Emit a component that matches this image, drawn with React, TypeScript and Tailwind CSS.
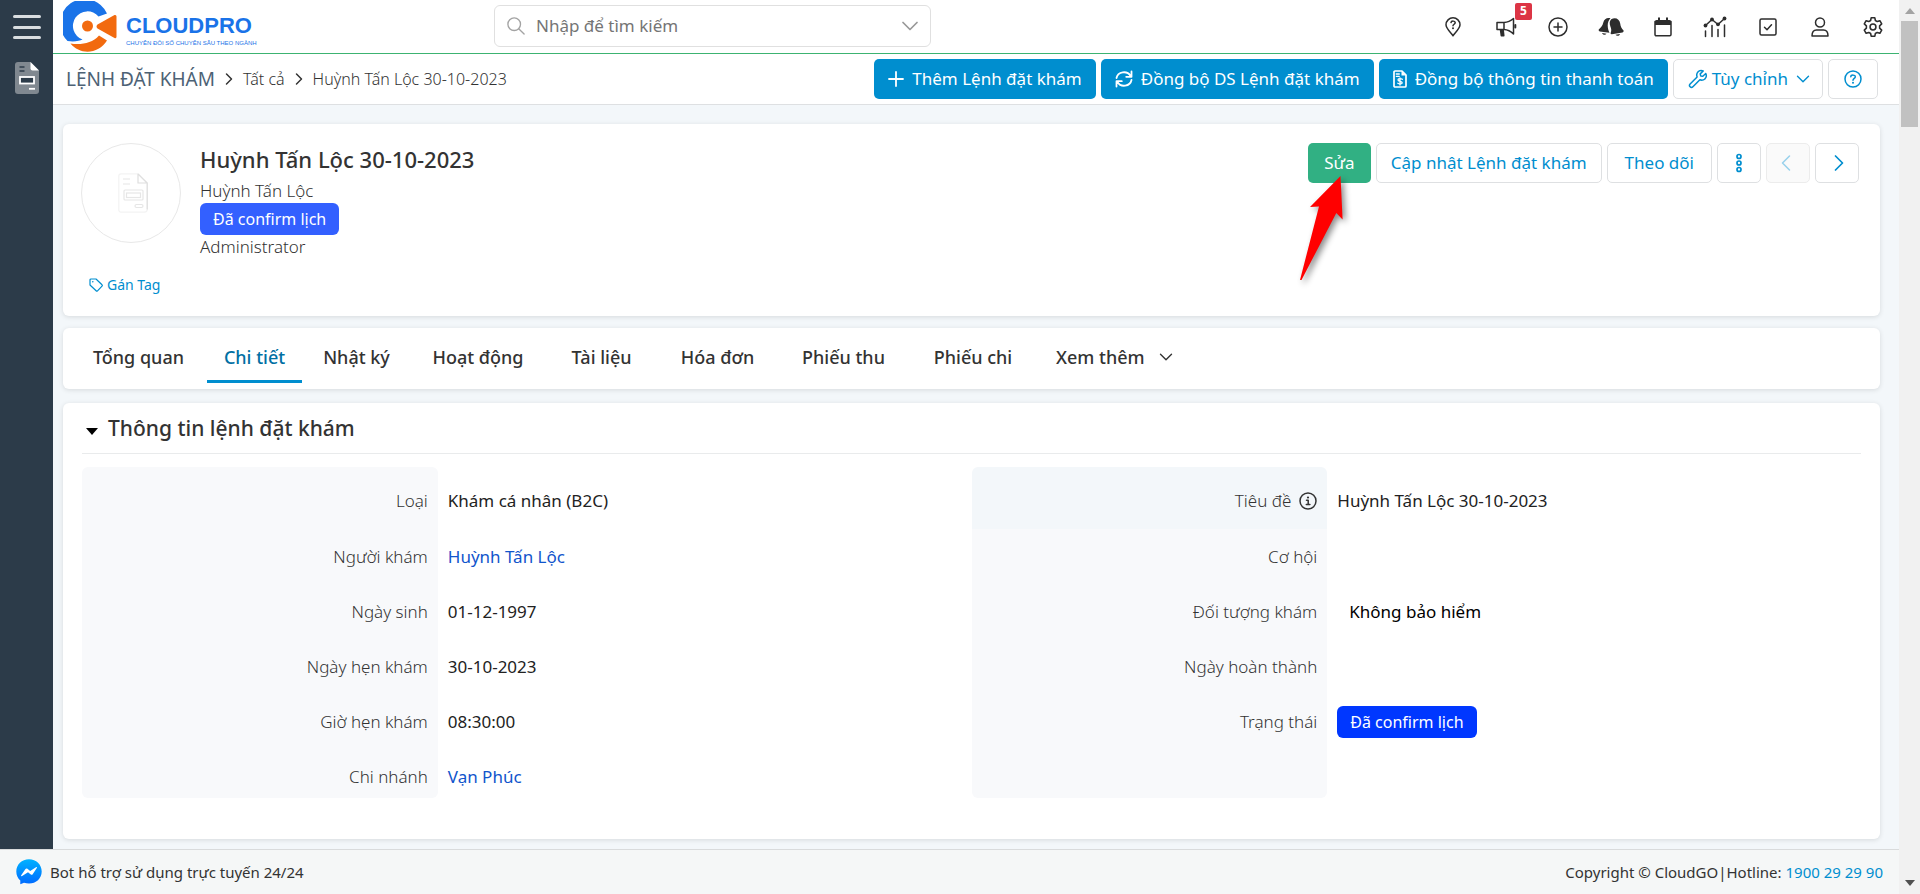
import React from "react";
import { ChevronDown, ChevronLeft, ChevronRight } from "lucide-react";

type IconProps = { className?: string };

const stroke = {
  fill: "none",
  stroke: "currentColor",
  strokeWidth: 1.5,
  strokeLinecap: "round",
  strokeLinejoin: "round",
} as const;

function Logo() {
  return (
    <svg viewBox="0 0 54 51" className="h-[51px] w-[54px] shrink-0" aria-hidden="true">
      <path
        d="M44 12.5A24.5 24.5 0 1 0 4.5 40C11 41 16.500 40 19.500 38.500A14.500 14.500 0 1 1 35.500 15.500Z"
        fill="#1a73e8"
      />
      <path d="M7.500 42.500C18 44 29 42.500 36 34.500L44 39.500C36 53 17 54.500 7.500 42.500Z" fill="#f26a0f" />
      <circle cx="24.500" cy="25" r="5.500" fill="#f26a0f" />
      <path d="M34.500 23.500L51.500 14Q53.500 13.500 53.500 15.500V35.500Q53.500 38 51.500 37L34.500 27.500Q32.500 25.500 34.500 23.500Z" fill="#f26a0f" />
    </svg>
  );
}

function SearchIcon({ className }: IconProps) {
  return (
    <svg viewBox="0 0 20 20" className={className} aria-hidden="true">
      <g {...stroke}>
        <circle cx="8" cy="8" r="7" />
        <path d="M13 13l6 6" />
      </g>
    </svg>
  );
}

function PinQuestionIcon() {
  return (
    <svg viewBox="0 0 16 20" className="h-5 w-4" aria-hidden="true">
      <g {...stroke}>
        <path d="M8 18.800C6.500 16.500 1 11.500 1 7.800a7 7 0 0 1 14 0C15 11.500 9.500 16.500 8 18.800Z" />
        <path d="M6 5.600c.2-2 4.200-2 4.200.2C10.200 7.200 8 7.300 8 8.800" />
      </g>
      <circle cx="8" cy="11.300" r="1" fill="currentColor" />
    </svg>
  );
}

function BullhornIcon() {
  return (
    <svg viewBox="0 0 22 20" className="h-5 w-[22px]" aria-hidden="true">
      <g {...stroke}>
        <path d="M2 5.500h7v7H2ZM9 5.500c4-.2 7-1.800 9.500-4v15.500c-2.500-2.500-5.500-4.300-9.500-4.500" />
        <path d="M20.300 8v2.500" strokeWidth="2" />
        <path d="M5.500 13l.8 5.700h2.500L8.200 13Z" fill="currentColor" />
      </g>
    </svg>
  );
}

function PlusCircleIcon() {
  return (
    <svg viewBox="0 0 20 20" className="h-5 w-5" aria-hidden="true">
      <g {...stroke}>
        <circle cx="10" cy="10" r="9" />
        <path d="M10 6v8M6 10h8" />
      </g>
    </svg>
  );
}

function BellsIcon() {
  return (
    <svg viewBox="0 0 26 20" className="h-5 w-[26px]" aria-hidden="true">
      <g fill="currentColor">
        <path d="M12.500 1.300C9 .3 6.200 2 5.300 5.500 4.600 8.800 2.800 10.500.9 12.300c-.6.900-.2 1.900.9 2.100l9.700 1.300C9.400 11.500 8.600 5 12.500 1.300Z" />
        <path d="M13.200 2.300c4.300-2.300 8.300-.2 9 4.200.4 3.300 1.500 5 3.200 6.800.6.900.1 1.900-.9 2.100l-10.700 1.800c-1 .1-1.500-.7-1-1.700.9-2 .4-4-.4-6C11.300 6.500 11.500 4 13.200 2.300Z" />
        <path d="M4 16l4.500.7c-1 1.700-3.800 1.300-4.500-.7ZM17.500 17.700l4.500-.8c-.5 2.100-3.500 2.600-4.500.8Z" />
      </g>
    </svg>
  );
}

function CalendarIcon() {
  return (
    <svg viewBox="0 0 18 20" className="h-5 w-[18px]" aria-hidden="true">
      <path d="M1 4.500h16v13a1.200 1.200 0 0 1-1.200 1.200H2.200A1.200 1.200 0 0 1 1 17.500Z" {...stroke} />
      <path d="M1 4.500A1.500 1.500 0 0 1 2.500 3H4V.5h2V3h6V.5h2V3h1.500A1.500 1.500 0 0 1 17 4.500V8H1Z" fill="currentColor" />
    </svg>
  );
}

function ChartIcon() {
  return (
    <svg viewBox="0 0 24 22" className="h-[22px] w-6" aria-hidden="true">
      <path d="M2.500 9.500L9 3.500l6 5L21.500 2.500" {...stroke} />
      <g fill="currentColor">
        <circle cx="2.500" cy="9.500" r="1.900" />
        <circle cx="9" cy="3.500" r="1.900" />
        <circle cx="15" cy="8.300" r="1.900" />
        <circle cx="21.500" cy="2.500" r="1.900" />
      </g>
      <path d="M2.500 15v5.500M9 9.500v11M15 13.500v7M21.500 9v11.500" {...stroke} />
    </svg>
  );
}

function CheckSquareIcon() {
  return (
    <svg viewBox="0 0 18 18" className="h-[18px] w-[18px]" aria-hidden="true">
      <g {...stroke}>
        <rect x="1" y="1" width="16" height="16" rx="1.500" />
        <path d="M5.500 9.200l2.500 2.500 4.500-5" />
      </g>
    </svg>
  );
}

function UserIcon() {
  return (
    <svg viewBox="0 0 18 20" className="h-5 w-[18px]" aria-hidden="true">
      <g {...stroke}>
        <circle cx="9" cy="5.500" r="4.500" />
        <path d="M1 19c0-4 2-6 4.500-6h7c2.500 0 4.500 2 4.500 6Z" />
      </g>
    </svg>
  );
}

function GearIcon() {
  return (
    <svg viewBox="0 0 24 24" className="h-[22px] w-[22px]" aria-hidden="true">
      <g {...stroke} strokeWidth={1.7}>
        <path d="M10 2h4l.6 2.900 2 1.200 2.900-1 2 3.500-2.300 2.100v2.600l2.300 2.100-2 3.500-2.900-1-2 1.200L14 22h-4l-.6-2.900-2-1.200-2.900 1-2-3.500 2.300-2.100v-2.600L2.500 8.600l2-3.500 2.900 1 2-1.200Z" />
        <circle cx="12" cy="12" r="3.200" />
      </g>
    </svg>
  );
}

function SyncIcon() {
  return (
    <svg viewBox="0 0 18 18" className="h-[18px] w-[18px]" aria-hidden="true">
      <g {...stroke} strokeWidth={1.800}>
        <path d="M1.500 8A7.500 7 0 0 1 15.500 6M16.500 1.500V6.800H11.200M16.500 10A7.500 7 0 0 1 2.500 12M1.500 16.500V11.200H6.800" />
      </g>
    </svg>
  );
}

function InvoiceIcon() {
  return (
    <svg viewBox="0 0 14 18" className="h-[18px] w-3.5" aria-hidden="true">
      <path d="M1 2a1 1 0 0 1 1-1h7l4 4v11a1 1 0 0 1-1 1H2a1 1 0 0 1-1-1Z" {...stroke} strokeWidth={1.700} />
      <path d="M8.500 1v4.500H13Z" fill="currentColor" />
      <path d="M3.300 4h3M3.300 6.300h3M9.300 9.300C8 8.300 5 8.500 5 10c0 1.700 4.200.9 4.200 2.700 0 1.600-3 1.600-4.400.6M7 7.800v7.200" {...stroke} strokeWidth={1.300} />
    </svg>
  );
}

function WrenchIcon() {
  return (
    <svg viewBox="0 0 20 20" className="h-5 w-5" aria-hidden="true">
      <g {...stroke}>
        <path d="M17.800 4.500L14.800 7.300 12.700 6.900 12.200 4.900 15.200 2C12.900 1 10.300 1.800 9.200 4 8.600 5.300 8.600 6.700 9.100 8L2.100 15C1.300 15.900 1.300 17 2.100 17.800s2 .8 2.800 0L11.900 10.800c2.300.9 5-.1 6-2.300.6-1.300.5-2.700-.1-4Z" />
      </g>
    </svg>
  );
}

function HelpIcon() {
  return (
    <svg viewBox="0 0 18 18" className="h-[18px] w-[18px]" aria-hidden="true">
      <g {...stroke}>
        <circle cx="9" cy="9" r="8" />
        <path d="M6.800 6.800c.2-2.300 4.600-2.200 4.500.1C11.200 8.300 9 8.500 9 10.200" />
      </g>
      <circle cx="9" cy="12.800" r="1" fill="currentColor" />
    </svg>
  );
}

function InfoIcon() {
  return (
    <svg viewBox="0 0 18 18" className="h-[18px] w-[18px]" aria-hidden="true">
      <circle cx="9" cy="9" r="8" {...stroke} />
      <path d="M7.500 8.300H9.200V12.500M7.300 12.500h3.600" {...stroke} />
      <circle cx="9" cy="5.500" r="1.100" fill="currentColor" />
    </svg>
  );
}

function TagIcon() {
  return (
    <svg viewBox="0 0 14 14" className="h-3.5 w-3.5" aria-hidden="true">
      <path d="M1 2a1 1 0 0 1 1-1h5l6 5.800a1 1 0 0 1 0 1.400L8.500 12.800a1 1 0 0 1-1.400 0L1 7Z" {...stroke} strokeWidth={1.200} />
      <circle cx="3.800" cy="3.800" r="0.800" fill="currentColor" />
    </svg>
  );
}

function DocumentIcon() {
  return (
    <svg viewBox="0 0 24 32" className="h-8 w-6" aria-hidden="true">
      <path d="M3 0h12.500L24 8.500V29a3 3 0 0 1-3 3H3a3 3 0 0 1-3-3V3a3 3 0 0 1 3-3Z" fill="#808890" />
      <path d="M15.500 0L24 8.500h-6.500a2 2 0 0 1-2-2Z" fill="#fff" />
      <path d="M4.500 5h5M4.500 9h5" stroke="#2c3b49" strokeWidth="1.500" />
      <rect x="5" y="15" width="14" height="6.500" fill="#2c3b49" stroke="#fff" strokeWidth="1.800" />
      <path d="M14 26.800h6" stroke="#fff" strokeWidth="1.800" />
    </svg>
  );
}

function AvatarDocumentIcon() {
  return (
    <svg viewBox="0 0 30 40" className="ml-1 h-10 w-[30px]" aria-hidden="true">
      <g fill="none" stroke="#e6e6e6" strokeWidth="1.200">
        <path d="M3 .8H20L29.200 10V36.500A2.800 2.800 0 0 1 26.500 39.200H3A2.400 2.400 0 0 1 .8 36.500V3A2.200 2.200 0 0 1 3 .8Z" stroke="#f3f3f3" />
        <path d="M20 .8V10H29.200M20 .8L29.200 10V36.500" stroke="#dedede" />
        <rect x="6" y="17" width="19" height="10" rx="1" />
        <rect x="8.500" y="20" width="14" height="4.500" />
        <path d="M5 6h7M5 11h7" />
        <rect x="17" y="31.500" width="8" height="3" rx="1.500" />
      </g>
    </svg>
  );
}

function MessengerIcon() {
  return (
    <svg viewBox="0 0 26 26" className="h-[26px] w-[26px]" aria-hidden="true">
      <defs>
        <linearGradient id="messenger" x1="0" y1="0" x2="0" y2="1">
          <stop offset="0" stopColor="#00b2ff" />
          <stop offset="1" stopColor="#006aff" />
        </linearGradient>
      </defs>
      <path d="M13 .3C5.800.3.300 5.600.300 12.500c0 3.700 1.500 6.800 4 9v3.800l3.700-1.500c1.500.5 3.200.8 5 .8 7.200 0 12.700-5.200 12.700-12.100S20.200.3 13 .3Z" fill="url(#messenger)" />
      <path d="M5.200 16.200L9.500 10c.5-.7 1.200-.8 1.900-.3L14.200 12l5.800-3.800c.6-.4 1.200.2.8.8L16.700 15.200c-.5.700-1.200.8-1.900.3L12 13.300l-5.900 3.800c-.6.300-1.300-.3-.9-.9Z" fill="#fff" />
    </svg>
  );
}

function PointerArrow() {
  return (
    <svg
      viewBox="0 0 44 104"
      className="pointer-events-none absolute top-[33px] -left-2 z-10 h-[104px] w-11 overflow-visible drop-shadow-[3px_3px_3px_rgba(0,0,0,0.45)]"
      aria-hidden="true"
    >
      <path d="M40.500 0L42.600 43.500 36.300 37 1.500 104H0L19 30.500 10 31Z" fill="#ff0000" />
    </svg>
  );
}

const headerIcons = [
  { label: "Bản đồ", icon: <PinQuestionIcon /> },
  { label: "Thông báo", icon: <BullhornIcon />, badge: "5" },
  { label: "Thêm", icon: <PlusCircleIcon /> },
  { label: "Nhắc nhở", icon: <BellsIcon /> },
  { label: "Lịch", icon: <CalendarIcon /> },
  { label: "Báo cáo", icon: <ChartIcon /> },
  { label: "Công việc", icon: <CheckSquareIcon /> },
  { label: "Tài khoản", icon: <UserIcon /> },
  { label: "Cài đặt", icon: <GearIcon /> },
];

const tabs = [
  { label: "Tổng quan", width: "w-[137px]" },
  { label: "Chi tiết", width: "w-[95px]", active: true },
  { label: "Nhật ký", width: "w-[109px]" },
  { label: "Hoạt động", width: "w-[134px]" },
  { label: "Tài liệu", width: "w-[113px]" },
  { label: "Hóa đơn", width: "w-[119px]" },
  { label: "Phiếu thu", width: "w-[133px]" },
  { label: "Phiếu chi", width: "w-[126px]" },
];

type Field = { label: string; value?: string; kind?: "link" | "badge" | "plain"; info?: boolean };

const leftFields: Field[] = [
  { label: "Loại", value: "Khám cá nhân (B2C)" },
  { label: "Người khám", value: "Huỳnh Tấn Lộc", kind: "link" },
  { label: "Ngày sinh", value: "01-12-1997" },
  { label: "Ngày hẹn khám", value: "30-10-2023" },
  { label: "Giờ hẹn khám", value: "08:30:00" },
  { label: "Chi nhánh", value: "Vạn Phúc", kind: "link" },
];

const rightFields: Field[] = [
  { label: "Tiêu đề", value: "Huỳnh Tấn Lộc 30-10-2023", info: true },
  { label: "Cơ hội" },
  { label: "Đối tượng khám", value: "Không bảo hiểm", kind: "plain" },
  { label: "Ngày hoàn thành" },
  { label: "Trạng thái", value: "Đã confirm lịch", kind: "badge" },
  { label: "" },
];

function FieldValue({ field }: { field: Field }) {
  if (!field.value) return null;
  if (field.kind === "link")
    return (
      <a href="#" className="text-[#1155cc]">
        {field.value}
      </a>
    );
  if (field.kind === "badge")
    return (
      <span className="-my-1 inline-block rounded-md bg-[#0037ff] px-[13px] py-1 text-base text-white">
        {field.value}
      </span>
    );
  if (field.kind === "plain") return <span className="px-3 text-black">{field.value}</span>;
  return <>{field.value}</>;
}

function FieldColumn({ fields }: { fields: Field[] }) {
  return (
    <dl className="text-[17px] leading-6">
      {fields.map((field, index) => {
        const first = index === 0;
        const last = index === fields.length - 1;
        const size = first ? "h-[62px] pt-[22px]" : last ? "h-[49px] pt-4" : "h-[55px] pt-4";
        const corner = first ? "rounded-t-md" : last ? "rounded-b-md" : "";
        const tint = field.info ? "bg-[#f3f7fa]" : "bg-[#f8f9fb]";
        return (
          <div key={index} className="flex">
            <dt className={`flex w-2/5 justify-end gap-2 pr-2.5 font-light text-[#333] ${size} ${corner} ${tint}`}>
              {field.label}
              {field.info && (
                <span className="pt-[3px]">
                  <InfoIcon />
                </span>
              )}
            </dt>
            <dd className={`flex-1 pl-2.5 text-[#222] ${size}`}>
              <FieldValue field={field} />
            </dd>
          </div>
        );
      })}
    </dl>
  );
}

const primaryButton = "flex h-10 items-center gap-2 rounded-[5px] bg-[#008ecf] px-3.5 text-[17px] text-white";
const outlineButton =
  "flex h-10 items-center justify-center rounded-[5px] border border-[#dee0e2] bg-white text-[17px] text-[#008ecf]";
const card = "rounded-md bg-white shadow-[0_1px_5px_rgba(0,0,0,0.12)]";

export default function App() {
  return (
    <div className="flex min-h-screen bg-[#f3f7fa] font-['Noto_Sans','Open_Sans',sans-serif] text-[#333]">
      <div className="flex min-w-0 flex-1 flex-col">
        <div className="flex flex-1">
          <nav className="flex w-[53px] shrink-0 flex-col items-center bg-[#2c3b49] pt-[15px]">
            <button type="button" aria-label="Menu" className="flex h-6 w-7 flex-col justify-between">
              <span className="h-[3px] w-7 rounded-sm bg-[#d9dde0]" />
              <span className="h-[3px] w-7 rounded-sm bg-[#d9dde0]" />
              <span className="h-[3px] w-7 rounded-sm bg-[#d9dde0]" />
            </button>
            <a href="#" aria-label="Lệnh đặt khám" className="mt-[23px]">
              <DocumentIcon />
            </a>
          </nav>

          <div className="min-w-0 flex-1">
            <header className="flex h-[54px] items-center justify-between border-b border-[#3cb371] bg-white">
              <a href="#" className="flex w-[441px] items-center gap-[9px] pl-2.5">
                <Logo />
                <span className="flex flex-col pt-2 font-['Liberation_Sans',sans-serif] text-[#1a73e8]">
                  <span className="text-[22px] leading-[22px] font-bold">CLOUDPRO</span>
                  <span className="mt-0.5 text-[6px] leading-2 whitespace-nowrap">
                    CHUYỂN ĐỔI SỐ CHUYÊN SÂU THEO NGÀNH
                  </span>
                </span>
              </a>
              <label className="mb-px flex h-[42px] w-[437px] items-center rounded-md border border-[#e0e0e0] pr-1.5 pl-3">
                <SearchIcon className="h-[18px] w-[18px] text-[#a3a3a3]" />
                <input
                  type="text"
                  aria-label="Tìm kiếm"
                  placeholder="Nhập để tìm kiếm"
                  className="ml-[11px] min-w-0 flex-1 text-[17px] outline-none placeholder:text-[#757575]"
                />
                <ChevronDown className="h-7 w-7" color="#999" strokeWidth={1.5} />
              </label>
              <div className="ml-auto grid w-[472px] grid-cols-9 text-[#2d2d2d]">
                {headerIcons.map((item) => (
                  <button
                    key={item.label}
                    type="button"
                    aria-label={item.label}
                    className="relative flex h-12 items-center justify-center"
                  >
                    {item.icon}
                    {item.badge && (
                      <span className="absolute top-0 right-0 flex h-[17px] w-[17px] items-center justify-center rounded-xs bg-[#dc3545] text-xs font-bold text-white">
                        {item.badge}
                      </span>
                    )}
                  </button>
                ))}
              </div>
            </header>

            <div className="flex h-[51px] items-center justify-between border-b border-[#dee0e2] bg-white pr-[21px] pl-[13px]">
              <div className="flex items-center gap-1 text-base">
                <span className="text-[19px] text-[#4d6275]">LỆNH ĐẶT KHÁM</span>
                <ChevronRight className="h-5 w-5" strokeWidth={1.8} />
                <a href="#" className="font-light">
                  Tất cả
                </a>
                <ChevronRight className="h-5 w-5" strokeWidth={1.8} />
                <span className="font-light">Huỳnh Tấn Lộc 30-10-2023</span>
              </div>
              <div className="flex gap-[5px]">
                <button type="button" className={primaryButton}>
                  <svg viewBox="0 0 16 16" className="h-4 w-4" aria-hidden="true">
                    <path d="M8 1v14M1 8h14" {...stroke} strokeWidth={1.800} />
                  </svg>
                  Thêm Lệnh đặt khám
                </button>
                <button type="button" className={primaryButton}>
                  <SyncIcon />
                  Đồng bộ DS Lệnh đặt khám
                </button>
                <button type="button" className={primaryButton}>
                  <InvoiceIcon />
                  Đồng bộ thông tin thanh toán
                </button>
                <button type="button" className={`${outlineButton} gap-1 pr-2 pl-3.5`}>
                  <WrenchIcon />
                  Tùy chỉnh
                  <ChevronDown className="h-[22px] w-[22px]" strokeWidth={1.5} />
                </button>
                <button type="button" aria-label="Trợ giúp" className={`${outlineButton} w-[50px]`}>
                  <HelpIcon />
                </button>
              </div>
            </div>

            <main className="flex flex-col gap-3 pt-[19px] pr-[19px] pb-2.5 pl-2.5">
              <section className={`${card} flex min-h-48 justify-between px-[18px] pt-[19px]`}>
                <div>
                  <div className="flex gap-[19px]">
                    <div className="flex h-[100px] w-[100px] items-center justify-center rounded-full border border-[#e8e8e8]">
                      <AvatarDocumentIcon />
                    </div>
                    <div className="flex flex-col items-start text-[17px] leading-6">
                      <h1 className="mb-1 text-[22px] leading-8 font-medium">Huỳnh Tấn Lộc 30-10-2023</h1>
                      <span className="font-light">Huỳnh Tấn Lộc</span>
                      <span className="rounded-md bg-[#3360ff] px-[13px] py-1 text-base text-white">
                        Đã confirm lịch
                      </span>
                      <span className="font-light">Administrator</span>
                    </div>
                  </div>
                  <button type="button" className="mt-4 ml-2 flex items-center gap-1 text-sm text-[#008ecf]">
                    <TagIcon />
                    Gán Tag
                  </button>
                </div>
                <div className="flex gap-[5px] pr-[3px]">
                  <div className="relative">
                    <button type="button" className="h-10 w-[63px] rounded-[5px] bg-[#31b083] text-[17px] text-white">
                      Sửa
                    </button>
                    <PointerArrow />
                  </div>
                  <button type="button" className={`${outlineButton} px-3.5`}>
                    Cập nhật Lệnh đặt khám
                  </button>
                  <button type="button" className={`${outlineButton} px-[17px]`}>
                    Theo dõi
                  </button>
                  <button type="button" aria-label="Thêm thao tác" className={`${outlineButton} w-11`}>
                    <svg viewBox="0 0 8 20" className="h-5 w-2" aria-hidden="true">
                      <g fill="none" stroke="currentColor" strokeWidth="1.700">
                        <circle cx="4" cy="3.500" r="2" />
                        <circle cx="4" cy="10" r="2" />
                        <circle cx="4" cy="16.500" r="2" />
                      </g>
                    </svg>
                  </button>
                  <button
                    type="button"
                    disabled
                    aria-label="Trước"
                    className="flex h-10 w-11 items-center justify-center rounded-[5px] border border-[#ececec] bg-[#fafafa] pr-1 text-[#99d1ec]"
                  >
                    <ChevronLeft className="h-7 w-7" strokeWidth={1.3} />
                  </button>
                  <button type="button" aria-label="Sau" className={`${outlineButton} w-11 pl-1`}>
                    <ChevronRight className="h-7 w-7" strokeWidth={1.5} />
                  </button>
                </div>
              </section>

              <section className={`${card} flex h-[61px] items-start pt-1 pl-[7px] text-lg font-medium`}>
                {tabs.map((tab) => (
                  <button
                    key={tab.label}
                    type="button"
                    className={`h-[51px] border-b-3 pt-0.5 ${tab.width} ${
                      tab.active ? "border-[#008ecf] text-[#006fa3]" : "border-transparent"
                    }`}
                  >
                    {tab.label}
                  </button>
                ))}
                <button
                  type="button"
                  className="flex h-[51px] items-center gap-2.5 border-b-3 border-transparent px-5 pt-0.5"
                >
                  Xem thêm
                  <ChevronDown className="h-[22px] w-[22px]" strokeWidth={1.5} />
                </button>
              </section>

              <section className={`${card} mt-0.5 px-[19px] pb-[41px]`}>
                <div className="flex h-[51px] items-center gap-2.5 border-b border-[#e9ebec] pt-0.5 pl-1">
                  <svg viewBox="0 0 12 8" className="mt-1 h-2 w-3" aria-hidden="true">
                    <path d="M0 1h12L6 8Z" fill="#000" />
                  </svg>
                  <h2 className="text-[21px] font-medium">Thông tin lệnh đặt khám</h2>
                </div>
                <div className="grid grid-cols-2 pt-[13px]">
                  <FieldColumn fields={leftFields} />
                  <FieldColumn fields={rightFields} />
                </div>
              </section>
            </main>
          </div>
        </div>

        <footer className="flex h-[45px] items-center justify-between border-t border-[#d9dbdc] bg-[#f5f7f7] pr-4 pl-4 text-[15px]">
          <a href="#" className="flex items-center gap-2">
            <MessengerIcon />
            Bot hỗ trợ sử dụng trực tuyến 24/24
          </a>
          <span>
            Copyright © CloudGO|Hotline:{" "}
            <a href="tel:1900292990" className="text-[#008ecf]">
              1900 29 29 90
            </a>
          </span>
        </footer>
      </div>

      <div className="flex w-[21px] shrink-0 flex-col items-center bg-[#f1f1f1]" aria-hidden="true">
        <svg viewBox="0 0 10 6" className="mt-2 h-1.5 w-2.5">
          <path d="M0 6L5 0l5 6Z" fill="#a3a3a3" />
        </svg>
        <div className="mt-[7px] h-[106px] w-[17px] bg-[#c1c1c1]" />
        <svg viewBox="0 0 10 6" className="mt-auto mb-2 h-1.5 w-2.5">
          <path d="M0 0h10L5 6Z" fill="#505050" />
        </svg>
      </div>
    </div>
  );
}
